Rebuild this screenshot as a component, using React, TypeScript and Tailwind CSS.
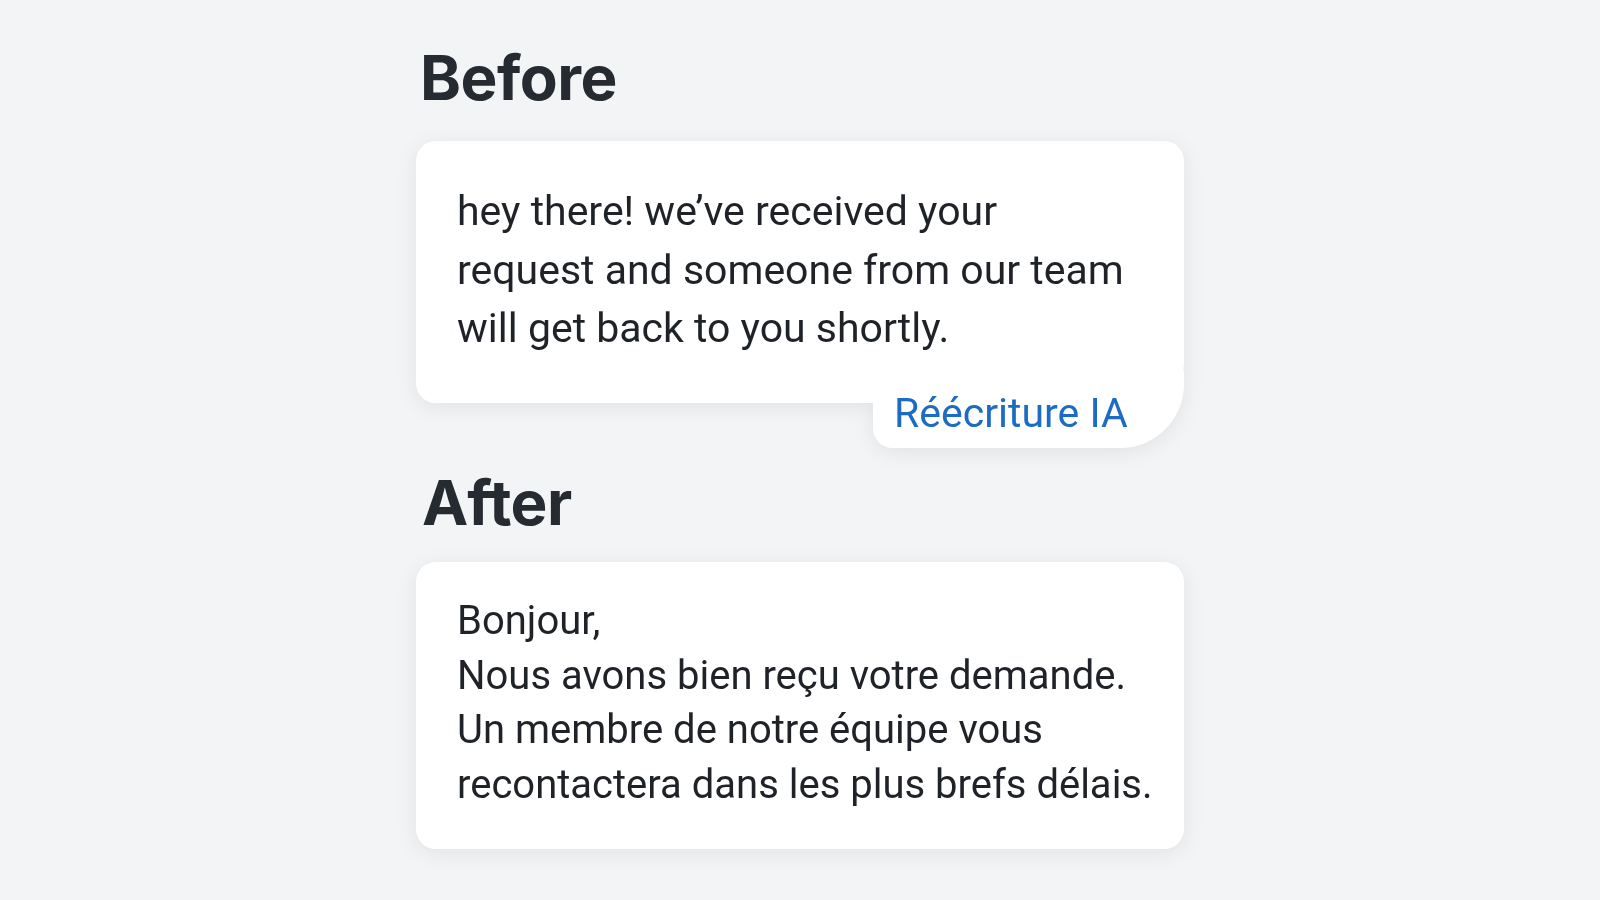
import React from "react";

export default function App() {
  return (
    <div className="min-h-[900px] w-full bg-[#f3f4f6] flex justify-center" style={{ fontFamily: "Roboto, 'Noto Sans', sans-serif" }}>
      <div className="w-[768px] flex flex-col">
        <h1 className="mt-[47px] ml-[4px] text-[62px] leading-[62px] font-bold text-[#262b32] tracking-[-0.5px]" style={{ fontFamily: "Inter, 'Noto Sans', sans-serif" }}>
          Before
        </h1>
        <div className="mt-[32px] flex flex-col drop-shadow-[0_4px_10px_rgba(0,0,0,0.07)]">
          <div className="bg-white rounded-t-[20px] rounded-bl-[20px] rounded-br-[40px] pl-[41px] pr-[40px] pt-[41px] pb-[45px] text-[41px] leading-[58.7px] text-[#1f2328]">
            <p>hey there! we’ve received your</p>
            <p>request and someone from our team</p>
            <p>will get back to you shortly.</p>
          </div>
          <div className="self-end -mt-[32px] w-[311px] h-[77px] bg-white rounded-bl-[20px] rounded-br-[64px] pl-[21px] pt-[27px]">
            <div className="text-[41px] leading-[30px] text-[#1d6cc4]">Réécriture IA</div>
          </div>
        </div>
        <h2 className="mt-[24px] ml-[6px] text-[62px] leading-[62px] font-bold text-[#262b32] tracking-[-0.5px]" style={{ fontFamily: "Inter, 'Noto Sans', sans-serif" }}>
          After
        </h2>
        <div className="mt-[28px] bg-white rounded-[20px] drop-shadow-[0_4px_10px_rgba(0,0,0,0.07)] pl-[41px] pr-[30px] pt-[32px] pb-[37px] text-[40px] leading-[54.6px] text-[#1f2328]">
          <p>Bonjour,</p>
          <p>Nous avons bien reçu votre demande.</p>
          <p>Un membre de notre équipe vous</p>
          <p>recontactera dans les plus brefs délais.</p>
        </div>
      </div>
    </div>
  );
}
